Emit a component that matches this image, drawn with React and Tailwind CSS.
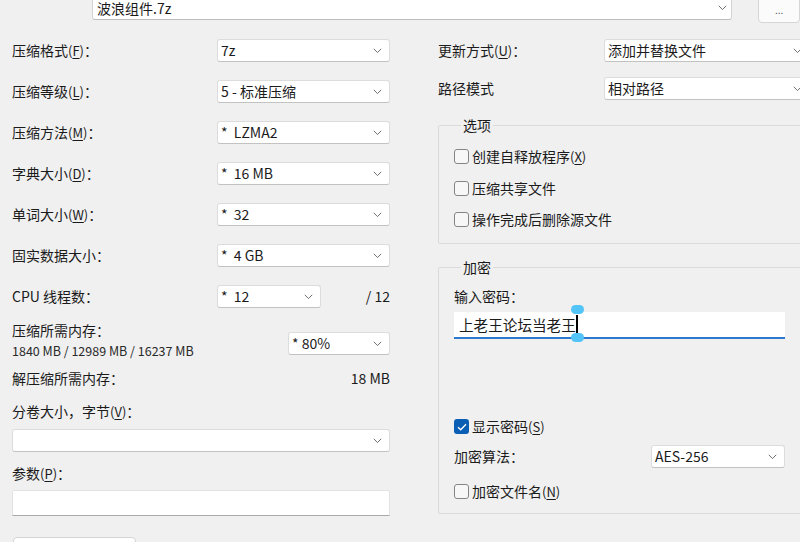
import React from 'react'

// 小下拉箭头
function Chevron() {
  return (
    <svg width="9" height="6" viewBox="0 0 9 6" className="shrink-0">
      <path d="M0.8 0.8 L4.5 4.6 L8.2 0.8" fill="none" stroke="#6f6f6f" strokeWidth="1" />
    </svg>
  )
}

function Select({ value, className = '' }) {
  return (
    <div className={`flex items-center justify-between h-[23px] bg-white border border-[#dcdcdc] border-b-[#c2c2c2] rounded-[3px] pl-[3px] pr-[7px] text-[14px] ${className}`}>
      <span className="whitespace-pre">{value}</span>
      <Chevron />
    </div>
  )
}

// 快捷键字母 (F)
function Mn({ k }) {
  return (
    <span className="text-[13px]">
      (<u className="underline-offset-2">{k}</u>)
    </span>
  )
}

function Checkbox({ checked }) {
  if (checked) {
    return (
      <span className="w-[15px] h-[15px] rounded-[3px] bg-[#0a5fb4] flex items-center justify-center shrink-0">
        <svg width="10" height="8" viewBox="0 0 10 8">
          <path d="M1 4.2 L3.7 6.8 L9 1.2" fill="none" stroke="white" strokeWidth="1.3" />
        </svg>
      </span>
    )
  }
  return <span className="w-[15px] h-[15px] rounded-[3px] border border-[#858585] bg-[#f7f7f7] shrink-0" />
}

function Check({ checked, children, className = '' }) {
  return (
    <label className={`flex items-center gap-[3px] leading-[20px] ${className}`}>
      <Checkbox checked={checked} />
      <span>{children}</span>
    </label>
  )
}

function Row({ label, children }) {
  return (
    <div className="flex items-start justify-between h-[41px]">
      <span className="leading-[23px]">{label}</span>
      {children}
    </div>
  )
}

export default function App() {
  return (
    <div className="w-[800px] h-[542px] overflow-hidden bg-[#f0f0f0] text-[#1b1b1b] text-[14px] font-['Noto_Sans_CJK_SC',sans-serif]">
      {/* 顶部：压缩包名称 */}
      <div className="flex items-start h-[39px]">
        <div className="ml-[92px] mt-[-4px] w-[646px] h-[24px] flex items-center justify-between bg-white border border-[#d4d4d4] border-b-[#bdbdbd] rounded-b-[3px] pl-[4px] pr-[4px]">
          <span className="text-[14px]">波浪组件.7z</span>
          <Chevron />
        </div>
        <div className="ml-[26px] mt-[-4px] w-[42px] h-[27px] bg-[#fbfbfb] border border-[#d6d6d6] rounded-[4px] flex items-center justify-center text-[10px] text-[#555]">
          ...
        </div>
      </div>

      <div className="flex items-start">
        {/* 左栏 */}
        <div className="ml-[12px] w-[378px] flex flex-col">
          <Row label={<>压缩格式<Mn k="F" />：</>}>
            <Select value="7z" className="w-[173px]" />
          </Row>
          <Row label={<>压缩等级<Mn k="L" />：</>}>
            <Select value="5 - 标准压缩" className="w-[173px]" />
          </Row>
          <Row label={<>压缩方法<Mn k="M" />：</>}>
            <Select value="*  LZMA2" className="w-[173px]" />
          </Row>
          <Row label={<>字典大小<Mn k="D" />：</>}>
            <Select value="*  16 MB" className="w-[173px]" />
          </Row>
          <Row label={<>单词大小<Mn k="W" />：</>}>
            <Select value="*  32" className="w-[173px]" />
          </Row>
          <Row label={<>固实数据大小：</>}>
            <Select value="*  4 GB" className="w-[173px]" />
          </Row>
          <div className="flex items-start h-[23px]">
            <span className="leading-[23px] w-[205px]">CPU 线程数：</span>
            <Select value="*  12" className="w-[104px]" />
            <span className="ml-auto leading-[23px]">/ 12</span>
          </div>

          <div className="flex items-start justify-between mt-[12px]">
            <div className="flex flex-col">
              <span className="leading-[20px]">压缩所需内存：</span>
              <span className="leading-[16px] mt-[3px] text-[12.5px] text-[#2a2a2a]">1840 MB / 12989 MB / 16237 MB</span>
            </div>
            <Select value="* 80%" className="w-[102px] mt-[12px]" />
          </div>

          <div className="flex justify-between mt-[9px] leading-[20px]">
            <span>解压缩所需内存：</span>
            <span>18 MB</span>
          </div>

          <span className="mt-[13px] leading-[20px]">分卷大小，字节<Mn k="V" />：</span>
          <Select value="" className="mt-[7px] w-[378px]" />

          <span className="mt-[11px] leading-[20px]">参数<Mn k="P" />：</span>
          <div className="mt-[6px] h-[26px] bg-white border border-[#e2e2e2] border-b-[#a8a8a8] rounded-t-[2px]" />

          <div className="mt-[21px] ml-[1px] w-[123px] h-[30px] bg-white border border-[#d4d4d4] rounded-[4px]" />
        </div>

        {/* 右栏 */}
        <div className="ml-[48px] w-[372px] flex flex-col">
          <div className="flex items-start">
            <span className="leading-[23px] w-[166px]">更新方式<Mn k="U" />：</span>
            <Select value="添加并替换文件" className="w-[206px]" />
          </div>
          <div className="flex items-start mt-[15px]">
            <span className="leading-[23px] w-[166px]">路径模式</span>
            <Select value="相对路径" className="w-[206px]" />
          </div>

          <fieldset className="mt-[15px] border border-[#dadada] rounded-[2px] pl-[15px] pb-[14px]">
            <legend className="ml-[7px] px-[2px] leading-[20px]">选项</legend>
            <div className="flex flex-col gap-[11px] mt-[11px]">
              <Check>创建自释放程序<Mn k="X" /></Check>
              <Check>压缩共享文件</Check>
              <Check>操作完成后删除源文件</Check>
            </div>
          </fieldset>

          <fieldset className="mt-[13px] border border-[#dadada] rounded-[2px] pl-[15px] pb-[11px]">
            <legend className="ml-[7px] px-[2px] leading-[20px]">加密</legend>
            <span className="block mt-[9px] leading-[20px]">输入密码：</span>
            <div className="relative mt-[6px] w-[331px] h-[27px] bg-white border-b-2 border-[#2c79cf] flex items-center pl-[5px]">
              <span className="text-[14.6px] leading-[20px]">上老王论坛当老王</span>
              <span className="absolute left-[122px] top-[3px] w-[2px] h-[18px] bg-black" />
              <span className="absolute left-[117px] top-[-7px] w-[13px] h-[9px] rounded-full bg-[#53c4f7]" />
              <span className="absolute left-[117px] top-[21px] w-[13px] h-[9px] rounded-full bg-[#53c4f7]" />
            </div>

            <Check checked className="mt-[77px]">显示密码<Mn k="S" /></Check>
            <div className="flex items-start mt-[8px]">
              <span className="leading-[23px] w-[197px]">加密算法：</span>
              <Select value="AES-256" className="w-[134px]" />
            </div>
            <Check className="mt-[13px]">加密文件名<Mn k="N" /></Check>
          </fieldset>
        </div>
      </div>
    </div>
  )
}
